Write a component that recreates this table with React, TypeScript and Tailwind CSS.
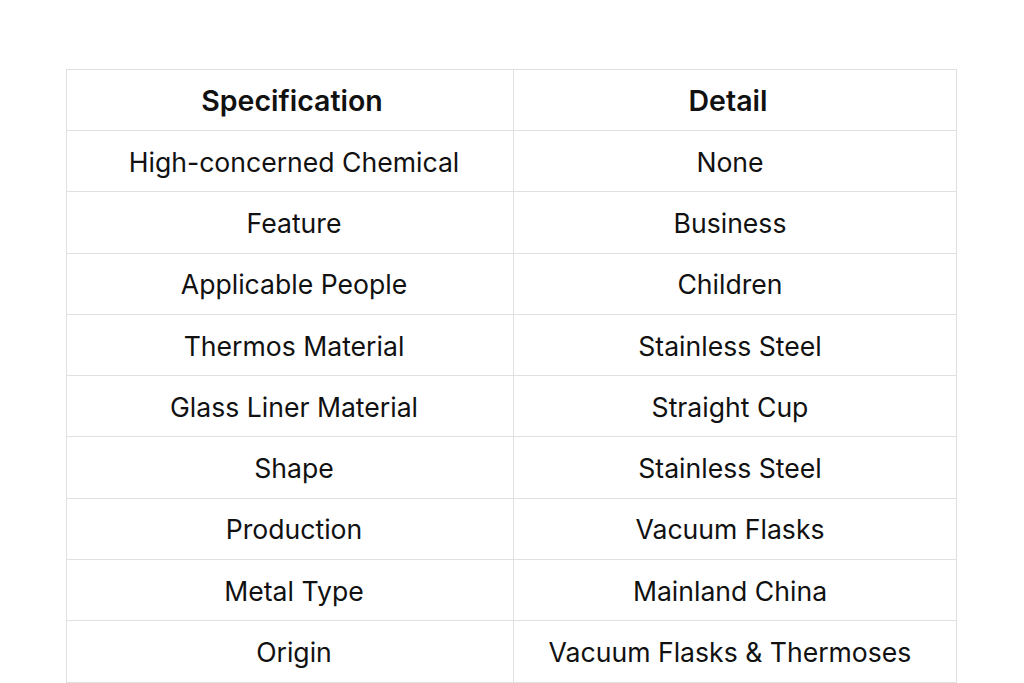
const ROWS: [string, string][] = [
  ['High-concerned Chemical', 'None'],
  ['Feature', 'Business'],
  ['Applicable People', 'Children'],
  ['Thermos Material', 'Stainless Steel'],
  ['Glass Liner Material', 'Straight Cup'],
  ['Shape', 'Stainless Steel'],
  ['Production', 'Vacuum Flasks'],
  ['Metal Type', 'Mainland China'],
  ['Origin', 'Vacuum Flasks & Thermoses'],
];

export default function App() {
  return (
    <div className="w-[1024px] h-[683px] overflow-hidden bg-white pt-[69px] pl-[66px] font-['Inter',sans-serif] text-[#111]">
      <table className="w-[891px] border-collapse table-fixed">
        <thead>
          <tr className="h-[61px]">
            <th className="w-[447px] border border-[#e0e0e0] pt-[3px] pl-[4px] text-[28.5px] font-semibold">Specification</th>
            <th className="border border-[#e0e0e0] pt-[3px] pr-[14px] text-[28.5px] font-semibold">Detail</th>
          </tr>
        </thead>
        <tbody>
          {ROWS.map(([spec, detail]) => (
            <tr key={spec} className="h-[61.3px]">
              <td className="border border-[#e0e0e0] pt-[3px] pl-[8px] text-center text-[26.6px]">{spec}</td>
              <td className="border border-[#e0e0e0] pt-[3px] pr-[10px] text-center text-[26.6px]">{detail}</td>
            </tr>
          ))}
        </tbody>
      </table>
    </div>
  );
}
